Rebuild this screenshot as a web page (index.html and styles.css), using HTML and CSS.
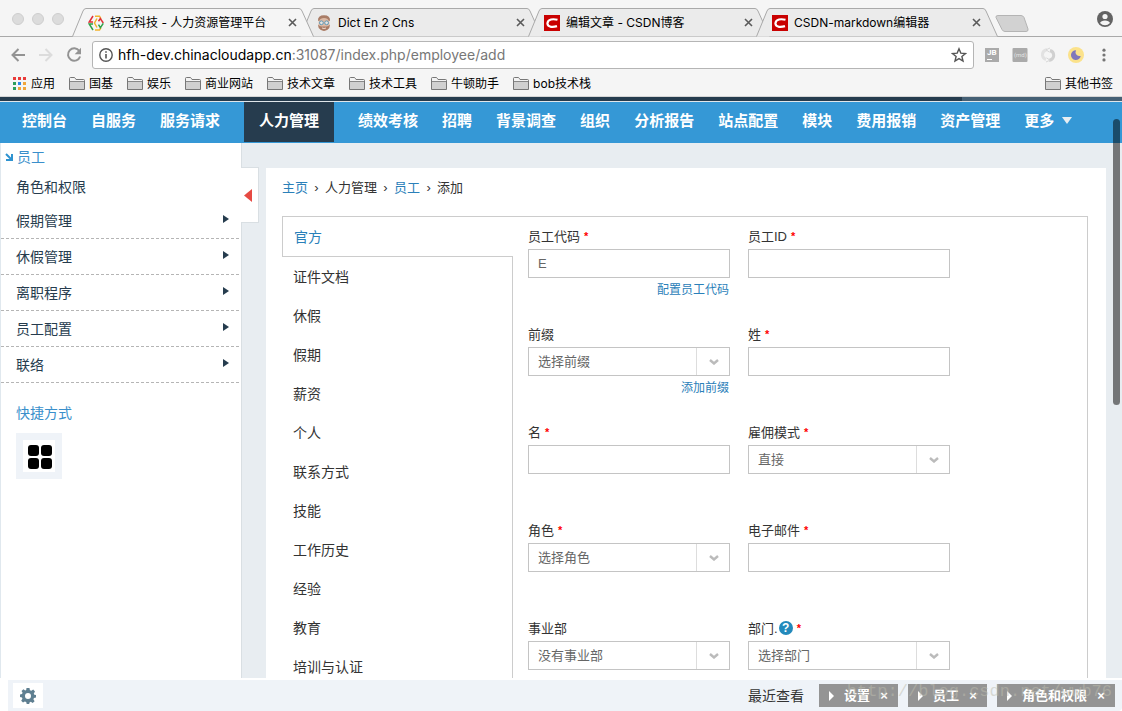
FILE: index.html
```html
<!DOCTYPE html>
<html lang="zh-CN">
<head>
<meta charset="utf-8">
<title>轻元科技 - 人力资源管理平台</title>
<link rel="stylesheet" href="styles.css">
</head>
<body>
<svg class="defs" aria-hidden="true">
  <symbol id="folder" viewBox="0 0 16 13"><path d="M.5 12.500V1.500q0-1 1-1h4l1.500 2h7.500q1 0 1 1v9z" fill="#d0d0d0" stroke="#777"/><path d="M1 2V1h4.300l1.500 2H15v1H1z" fill="#f3f3f3"/><path d="M1 4.500h14" stroke="#888"/></symbol>
  <symbol id="cross" viewBox="0 0 9 9"><path d="M1 1l7 7M8 1L1 8" stroke="#5a5a5a" stroke-width="1.600" fill="none"/></symbol>
  <symbol id="csdn" viewBox="0 0 16 16"><path fill="#c90000" d="M0 0h16v16H0z"/><path d="M13.500 4.800Q10 3.900 7 4.500 3.600 5.300 3.400 8.500q.3 2.900 3.600 3.300 3 .3 6-.7" fill="none" stroke="#fff" stroke-width="2.200"/></symbol>
  <symbol id="tabshape" viewBox="0 0 242 29" preserveAspectRatio="none"><path d="M.5 28.500L11 3Q12 .5 14 .5H227Q229 .5 230 3L241.500 28.500" stroke="#a9a9a9"/></symbol>
  <symbol id="chev" viewBox="0 0 10 6"><path d="M1 1l4 3.500L9 1" fill="none" stroke="#bbb" stroke-width="2.400"/></symbol>
</svg>

<header class="browser">
  <div class="tabstrip">
    <div class="lights"><i></i><i></i><i></i></div>
    <div class="tabs">
      <div class="tab tab-active"><svg class="tab-bg"><use href="#tabshape"/></svg>
        <svg class="fav" viewBox="0 0 16 16" fill="none" stroke-width="1.500"><path d="M5 1L1.200 7H5" stroke="#e03038"/><path d="M5 9H1.200L5 15" stroke="#2fa14a"/><path d="M7 1.200h4.500L13 3.800M9 3.500L6.500 8 9 12.500M7 15h4.500L13 12.500" stroke="#f2b32c"/><path d="M10.500 6.200L12.300 3.600 15.300 8" stroke="#e03038"/><path d="M15.300 8.400L12.400 12.600 10.500 9.600" stroke="#2fa14a"/></svg>
        <span class="tab-title">轻元科技 - 人力资源管理平台</span><button class="tab-close" aria-label="关闭"><svg><use href="#cross"/></svg></button></div>
      <div class="tab"><svg class="tab-bg"><use href="#tabshape"/></svg>
        <svg class="fav" viewBox="0 0 16 16"><path d="M3 3q5-4 10 0l.5 8Q12 15.500 8 15.700 4 15.500 2.500 11z" fill="#dcb9a4"/><path d="M2 6Q1.500.300 8 .300T14 6l-1.500-.5Q12 3 8 3T3.500 5.500zM2 9.500l.7 3.500Q5 16 8 16t5.300-3L14 9.500q-1.500 2-3.500 2h-5q-2 0-3.500-2z" fill="#a97c66"/><path d="M6 13q2 1 4 0" stroke="#f0ddd2" fill="none"/><g fill="#e6e3e0" stroke="#5f9ab8"><circle cx="5.400" cy="7.800" r="1.900"/><circle cx="10.600" cy="7.800" r="1.900"/></g></svg>
        <span class="tab-title">Dict En 2 Cns</span><button class="tab-close" aria-label="关闭"><svg><use href="#cross"/></svg></button></div>
      <div class="tab"><svg class="tab-bg"><use href="#tabshape"/></svg><svg class="fav"><use href="#csdn"/></svg>
        <span class="tab-title">编辑文章 - CSDN博客</span><button class="tab-close" aria-label="关闭"><svg><use href="#cross"/></svg></button></div>
      <div class="tab"><svg class="tab-bg"><use href="#tabshape"/></svg><svg class="fav"><use href="#csdn"/></svg>
        <span class="tab-title">CSDN-markdown编辑器</span><button class="tab-close" aria-label="关闭"><svg><use href="#cross"/></svg></button></div>
    </div>
    <button class="newtab" aria-label="新标签页"><svg viewBox="0 0 34 17"><path d="M3 .500h23q2 0 3 2l4 11.500q.5 2.500-2 2.500H10q-2 0-3-2L1 2.500Q.5.500 3 .500z" fill="#d2d2d2" stroke="#b4b4b4"/></svg></button>
    <button class="profile" aria-label="用户"><svg viewBox="0 0 16 16"><circle cx="8" cy="8" r="8" fill="#636363"/><circle cx="8" cy="5.500" r="2.600" fill="#f5f5f5"/><path d="M3 12q1-2.600 5-2.600t5 2.600q-2 2.200-5 2.200T3 12z" fill="#f5f5f5"/></svg></button>
  </div>

  <div class="toolbar">
    <button aria-label="后退"><svg viewBox="0 0 16 16" fill="none" stroke="#939393" stroke-width="2"><path d="M15 8H3M8.500 2L2.500 8l6 6"/></svg></button>
    <button aria-label="前进"><svg viewBox="0 0 16 16" fill="none" stroke="#dcdcdc" stroke-width="2"><path d="M1 8h12M7.500 2l6 6-6 6"/></svg></button>
    <button aria-label="刷新"><svg viewBox="0 0 16 16"><path d="M13.300 4A6.200 6.200 0 1 0 14.100 9.500" fill="none" stroke="#939393" stroke-width="2"/><path d="M15 .800v6.400H8.700z" fill="#939393"/></svg></button>
    <label class="omnibox">
      <svg class="info" viewBox="0 0 14 14"><circle cx="7" cy="7" r="6.200" fill="none" stroke="#555" stroke-width="1.400"/><path d="M7 6v4.500M7 3.300v1.500" stroke="#555" stroke-width="1.600"/></svg>
      <span class="url" role="textbox" tabindex="0" aria-label="地址"><b>hfh-dev.chinacloudapp.cn</b>:31087/index.php/employee/add</span>
      <svg class="star" viewBox="0 0 16 16"><path d="M8 1.800l1.800 4.300 4.700.4-3.600 3 1.100 4.600L8 11.600l-4 2.500 1.100-4.600-3.600-3 4.700-.4z" fill="none" stroke="#555" stroke-width="1.400"/></svg>
    </label>
    <div class="exts">
      <button aria-label="JB"><svg viewBox="0 0 16 16"><path fill="#aaa" d="M1 1h14v14H1z"/><path d="M3 12.500h5" stroke="#fff"/><text x="3" y="8" class="jb">JB</text></svg></button>
      <button aria-label="md"><svg viewBox="0 0 16 16"><rect x=".5" y="1" width="15" height="14" rx="1" fill="#aaa"/><text x="2" y="10" class="md">(md)</text></svg></button>
      <button aria-label="扩展"><svg viewBox="0 0 16 16" fill="none" stroke-width="3"><path d="M7 2.500Q2 4 2.500 8.500q.5 3 3.500 4" stroke="#e2e2e2"/><path d="M9 13.500q5-1.500 4.700-5.500-.2-3.500-3.700-4.500" stroke="#d0d0d0"/><path d="M10 1L6 2.800l3.500 2.400M6 15l4-1.800-3.500-2.400" stroke="#d8d8d8" stroke-width="1"/></svg></button>
      <button aria-label="夜间模式"><svg viewBox="0 0 16 16"><circle cx="8" cy="8" r="8" fill="#fbe28b"/><path d="M8 3.300a4 4 0 0 0 4.700 5.600A4.900 4.900 0 1 1 8 3.300z" fill="#8077bb"/></svg></button>
      <button aria-label="菜单"><svg viewBox="0 0 16 16" fill="#757575"><circle cx="8" cy="3.200" r="1.600"/><circle cx="8" cy="8" r="1.600"/><circle cx="8" cy="12.900" r="1.600"/></svg></button>
    </div>
  </div>

  <nav class="bookmarks" aria-label="书签">
    <a href="#"><svg class="apps" viewBox="0 0 13 13"><path fill="#e93b39" d="M0 0h3v3H0zM5 0h3v3H5zM10 0h3v3h-3z"/><path fill="#2c9d5b" d="M0 5h3v3H0zM0 10h3v3H0z"/><path fill="#2d86e8" d="M5 5h3v3H5z"/><path fill="#f0a53b" d="M10 5h3v3h-3zM5 10h3v3H5zM10 10h3v3h-3z"/></svg>应用</a>
    <a href="#"><svg><use href="#folder"/></svg>国基</a>
    <a href="#"><svg><use href="#folder"/></svg>娱乐</a>
    <a href="#"><svg><use href="#folder"/></svg>商业网站</a>
    <a href="#"><svg><use href="#folder"/></svg>技术文章</a>
    <a href="#"><svg><use href="#folder"/></svg>技术工具</a>
    <a href="#"><svg><use href="#folder"/></svg>牛顿助手</a>
    <a href="#"><svg><use href="#folder"/></svg>bob技术栈</a>
    <a href="#" class="other"><svg><use href="#folder"/></svg>其他书签</a>
  </nav>
</header>

<div class="strip"><i></i></div>
<nav class="mainnav" aria-label="主导航">
  <a href="#">控制台</a><a href="#">自服务</a><a href="#">服务请求</a><a href="#" class="current">人力管理</a><a href="#">绩效考核</a><a href="#">招聘</a><a href="#">背景调查</a><a href="#">组织</a><a href="#">分析报告</a><a href="#">站点配置</a><a href="#">模块</a><a href="#">费用报销</a><a href="#">资产管理</a><a href="#">更多<svg viewBox="0 0 10 7"><path fill="#e8eef2" d="M0 0h10L5 7z"/></svg></a>
</nav>

<div class="workspace">
  <aside class="sidebar">
    <a href="#" class="side-head"><svg viewBox="0 0 8 8"><path d="M1 1l5 5M7 1v6H1" fill="none" stroke="#2f93d0" stroke-width="2"/></svg>员工</a>
    <a href="#" class="side-link">角色和权限</a>
    <a href="#" class="side-item">假期管理<svg viewBox="0 0 6 8"><path d="M0 0v8l6-4z"/></svg></a>
    <a href="#" class="side-item">休假管理<svg viewBox="0 0 6 8"><path d="M0 0v8l6-4z"/></svg></a>
    <a href="#" class="side-item">离职程序<svg viewBox="0 0 6 8"><path d="M0 0v8l6-4z"/></svg></a>
    <a href="#" class="side-item">员工配置<svg viewBox="0 0 6 8"><path d="M0 0v8l6-4z"/></svg></a>
    <a href="#" class="side-item">联络<svg viewBox="0 0 6 8"><path d="M0 0v8l6-4z"/></svg></a>
    <h2>快捷方式</h2>
    <button class="shortcut" aria-label="快捷方式"><svg viewBox="0 0 24 24"><rect width="11" height="11" rx="3"/><rect x="13" width="11" height="11" rx="3"/><rect y="13" width="11" height="11" rx="3"/><rect x="13" y="13" width="11" height="11" rx="3"/></svg></button>
    <button class="handle" aria-label="收起"><svg viewBox="0 0 8 13"><path d="M8 0v13L0 6.500z" fill="#e64a43"/></svg></button>
  </aside>

  <main class="content">
    <nav class="crumbs" aria-label="路径"><a href="#">主页</a><span>›</span>人力管理<span>›</span><a href="#">员工</a><span>›</span>添加</nav>
    <div class="panel">
      <nav class="steps" aria-label="员工信息">
        <a href="#" class="selected">官方</a>
        <a href="#">证件文档</a><a href="#">休假</a><a href="#">假期</a><a href="#">薪资</a><a href="#">个人</a><a href="#">联系方式</a><a href="#">技能</a><a href="#">工作历史</a><a href="#">经验</a><a href="#">教育</a><a href="#">培训与认证</a>
      </nav>
      <form class="fields">
        <div class="field"><label for="code">员工代码<em>*</em></label><input id="code" value="E"><a href="#">配置员工代码</a></div>
        <div class="field"><label for="eid">员工ID<em>*</em></label><input id="eid"></div>
        <div class="field"><label for="prefix">前缀</label><div class="pick"><select id="prefix"><option>选择前缀</option></select><svg><use href="#chev"/></svg></div><a href="#">添加前缀</a></div>
        <div class="field"><label for="last">姓<em>*</em></label><input id="last"></div>
        <div class="field"><label for="first">名<em>*</em></label><input id="first"></div>
        <div class="field"><label for="mode">雇佣模式<em>*</em></label><div class="pick"><select id="mode"><option>直接</option></select><svg><use href="#chev"/></svg></div></div>
        <div class="field"><label for="role">角色<em>*</em></label><div class="pick"><select id="role"><option>选择角色</option></select><svg><use href="#chev"/></svg></div></div>
        <div class="field"><label for="mail">电子邮件<em>*</em></label><input id="mail" type="email"></div>
        <div class="field"><label for="unit">事业部</label><div class="pick"><select id="unit"><option>没有事业部</option></select><svg><use href="#chev"/></svg></div></div>
        <div class="field"><label for="dept">部门.<b class="help">?</b><em>*</em></label><div class="pick"><select id="dept"><option>选择部门</option></select><svg><use href="#chev"/></svg></div></div>
      </form>
    </div>
  </main>
</div>

<footer class="dock">
  <button class="gear" aria-label="设置"><svg viewBox="0 0 16 16"><path d="M6.500 0h3l.4 2.200 1.500.6L13.200 1.500l1.800 2-1.200 1.900.5 1.300L16 7v2.500l-2 .5-.6 1.300 1.200 1.900-1.900 1.800-1.900-1.200-1.300.6L9.200 16H6.700l-.5-2-1.400-.6L3 14.600l-1.800-1.900 1.200-1.900L2 9.500l-2-.4V6.600l2-.5.6-1.400L1.500 3l1.900-1.800 1.800 1.300 1-.4zM8 5a3 3 0 1 0 0 6 3 3 0 0 0 0-6z" fill="#5f7f91" fill-rule="evenodd"/></svg></button>
  <span class="recent">最近查看</span>
  <div class="chips">
    <button><svg viewBox="0 0 5 10"><path d="M0 0v10l5-5z"/></svg>设置<span>×</span></button>
    <button><svg viewBox="0 0 5 10"><path d="M0 0v10l5-5z"/></svg>员工<span>×</span></button>
    <button><svg viewBox="0 0 5 10"><path d="M0 0v10l5-5z"/></svg>角色和权限<span>×</span></button>
  </div>
  <span class="stamp">http://blog.csdn.net/wwb76</span>
</footer>
<div class="scrollbar"></div>
</body>
</html>
```
FILE: styles.css
```css
* { box-sizing: border-box; }
body {
  margin: 0;
  height: 100vh;
  display: flex;
  flex-direction: column;
  overflow: hidden;
  position: relative;
  background: #fff;
  color: #333;
  font: 14px/20px "Liberation Sans", "Noto Sans CJK SC", sans-serif;
}
a { color: inherit; text-decoration: none; }
button { border: 0; padding: 0; margin: 0; background: none; font: inherit; color: inherit; display: flex; align-items: center; justify-content: center; }
svg { display: block; flex: none; }
.defs { position: absolute; width: 0; height: 0; }

/* Browser frame */
.browser { flex: none; background: #f5f5f5; color: #000; font: 12px/18px Inter, "Noto Sans CJK SC", sans-serif; border-bottom: 1px solid #d5d5d5; }
.tabstrip { height: 37px; display: flex; align-items: flex-end; border-bottom: 1px solid #a9a9a9; padding-right: 9px; }
.lights { display: flex; gap: 8px; width: 72px; padding-left: 12px; flex: none; margin-bottom: 11px; }
.lights i { width: 12px; height: 12px; border-radius: 50%; background: #dcdcdc; border: 1px solid #cecece; }
.tabs { display: flex; flex: 0 1 912px; min-width: 0; margin-bottom: -1px; }
.tab { position: relative; flex: 0 0 242px; height: 29px; margin-right: -14px; padding: 0 17px 0 16px; display: flex; align-items: center; gap: 6px; min-width: 0; }
.tab-active { z-index: 2; }
.tab-bg { position: absolute; inset: 0; width: 100%; height: 100%; fill: #ebebeb; }
.tab-active .tab-bg { fill: #f5f5f5; }
.fav { width: 16px; height: 16px; position: relative; }
.tab-title { flex: 1; position: relative; white-space: nowrap; overflow: hidden; }
.tab-close { position: relative; }
.tab-close svg { width: 9px; height: 9px; }
.newtab { margin: 0 0 4px 11px; }
.newtab svg { width: 34px; height: 17px; }
.profile { margin: 0 0 9px auto; }
.profile svg { width: 16px; height: 16px; }
.toolbar { height: 35px; display: flex; align-items: center; gap: 12px; padding: 0 10px; }
.toolbar button svg { width: 16px; height: 16px; }
.omnibox { flex: 1; min-width: 0; height: 28px; display: flex; align-items: center; gap: 5px; padding: 0 6px; margin: 0 -2px; background: #fff; border: 1px solid #b5b5b5; border-radius: 3px; font: 14px/20px Inter, sans-serif; }
.info { width: 14px; height: 14px; }
.url { flex: 1; color: #777; white-space: nowrap; overflow: hidden; }
.url b { font-weight: 400; color: #000; }
.star { width: 16px; height: 16px; }
.exts { display: flex; gap: 12px; }
.jb { font: bold 8px Roboto, sans-serif; fill: #fff; }
.md { font: 6px Roboto, sans-serif; fill: #e4e4e4; }
.bookmarks { height: 24px; display: flex; align-items: center; gap: 14px; padding: 0 9px 1px 13px; white-space: nowrap; }
.bookmarks a { display: flex; align-items: center; gap: 4px; }
.bookmarks svg { width: 16px; height: 13px; }
.bookmarks svg.apps { width: 13px; margin-right: 1px; }
.bookmarks .other { margin-left: auto; }

/* Application header */
.strip { flex: none; height: 5px; background: #263c4e; border-bottom: 1px solid #dfe6eb; display: flex; justify-content: flex-end; }
.strip i { width: 160px; background: #456075; }
.mainnav { flex: none; height: 41px; display: flex; gap: 24px; padding: 0 22px; background: #3598d6; color: #fff; font-size: 15px; font-weight: 700; line-height: 38px; white-space: nowrap; }
.mainnav a { display: flex; gap: 8px; height: 40px; }
.mainnav .current { background: #263c4e; padding: 0 15px; }
.mainnav svg { width: 10px; height: 7px; margin-top: 15px; }

.workspace { flex: 1; min-height: 0; display: flex; background: #e8edf1; border-bottom: 2px solid #fff; }
.sidebar { position: relative; flex: none; width: 242px; background: #fff; border-left: 1px solid #e0e8ee; border-right: 1px solid #d9dfe3; color: #263c4e; }
.side-head { display: flex; align-items: center; gap: 4px; height: 28px; padding-left: 4px; color: #3a8fcb; }
.side-head svg { width: 8px; height: 8px; }
.side-link { display: flex; align-items: center; height: 32px; padding-left: 15px; }
.side-item { display: flex; align-items: center; justify-content: space-between; height: 36px; margin-right: 2px; padding: 0 10px 0 15px; border-bottom: 1px dashed #b5b5b5; }
.side-item svg { width: 6px; height: 8px; margin-bottom: 4px; fill: #263c4e; }
.sidebar h2 { margin: 20px 0 10px 15px; font-size: 14px; line-height: 20px; font-weight: 400; color: #3a8fcb; }
.shortcut { width: 46px; height: 46px; margin-left: 15px; padding: 2px 0 0 2px; background: #fff; border: 7px solid #eff3f8; }
.shortcut svg { width: 24px; height: 24px; }
.handle { position: absolute; left: 240px; top: 24px; width: 18px; height: 56px; background: #fff; border: 1px solid #d9dfe3; border-left: 0; }
.handle svg { width: 8px; height: 13px; margin-right: 3px; }

.content { flex: 1; min-width: 0; margin: 25px 16px 0 24px; padding: 10px 18px 0 16px; background: #fff; display: flex; flex-direction: column; }
.crumbs { font-size: 13px; display: flex; }
.crumbs a { color: #2a80b9; }
.crumbs span { width: 17px; text-align: center; }
.panel { flex: 1; min-height: 0; overflow: hidden; margin-top: 18px; border: 1px solid #ccc; border-width: 1px 1px 0 0; display: flex; }
.steps { flex: none; width: 231px; display: flex; flex-direction: column; }
.steps a { flex: none; height: 39px; line-height: 41px; padding-left: 11px; border-right: 1px solid #ccc; }
.steps .selected { height: 40px; border: 1px solid #ccc; border-width: 0 0 1px 1px; color: #2a80b9; }
.fields { flex: 1; min-width: 0; display: grid; grid-template-columns: repeat(2, minmax(0, 202px)); grid-auto-rows: 98px; column-gap: 18px; align-content: start; padding: 10px 15px 0; font-size: 13px; }
.field { display: flex; flex-direction: column; }
.field label { height: 22px; display: flex; align-items: flex-start; }
.field em { margin-left: 4px; color: #f00; font-style: normal; font-size: 11px; font-weight: 700; line-height: 18px; }
.field input, .field select { width: 100%; height: 29px; margin: 0; padding: 0 9px; border: 1px solid #c4c4c4; border-radius: 0; background: #fff; color: #666; font: 13px/20px "Liberation Sans", "Noto Sans CJK SC", sans-serif; appearance: none; }
.field > a { align-self: flex-end; margin-right: 1px; padding-top: 2px; font-size: 12px; color: #2a80b9; }
.pick { position: relative; }
.pick::after { content: ""; position: absolute; right: 33px; top: 1px; bottom: 1px; width: 1px; background: #ddd; }
.pick svg { position: absolute; right: 11px; top: 12px; width: 10px; height: 6px; pointer-events: none; }
.help { width: 14px; height: 14px; margin: 2px 0 0 1px; border-radius: 50%; background: #2389bb; color: #fff; font-size: 12px; line-height: 14px; text-align: center; }

/* Bottom dock */
.dock { position: relative; flex: none; height: 31px; margin-left: 8px; padding: 0 7px 0 5px; display: flex; align-items: center; background: #eff3f8; border-radius: 0 0 4px 0; }
.gear { width: 30px; height: 25px; background: #fff; }
.gear svg { width: 16px; height: 16px; }
.recent { margin-left: auto; margin-right: 15px; }
.chips { display: flex; gap: 10px; }
.chips button { height: 23px; padding: 0 10px; gap: 10px; background: #949494; color: #fff; font-size: 13px; font-weight: 700; line-height: 20px; }
.chips svg { width: 5px; height: 10px; fill: #fff; }
.chips span { width: 8px; }
.stamp { position: absolute; right: 10px; top: 2px; font: 17px/20px "Liberation Mono", monospace; color: rgba(190, 190, 175, .5); pointer-events: none; }
.scrollbar { position: absolute; right: 2px; top: 119px; width: 7px; height: 286px; border-radius: 4px; background: rgba(0, 0, 0, .5); }
```
